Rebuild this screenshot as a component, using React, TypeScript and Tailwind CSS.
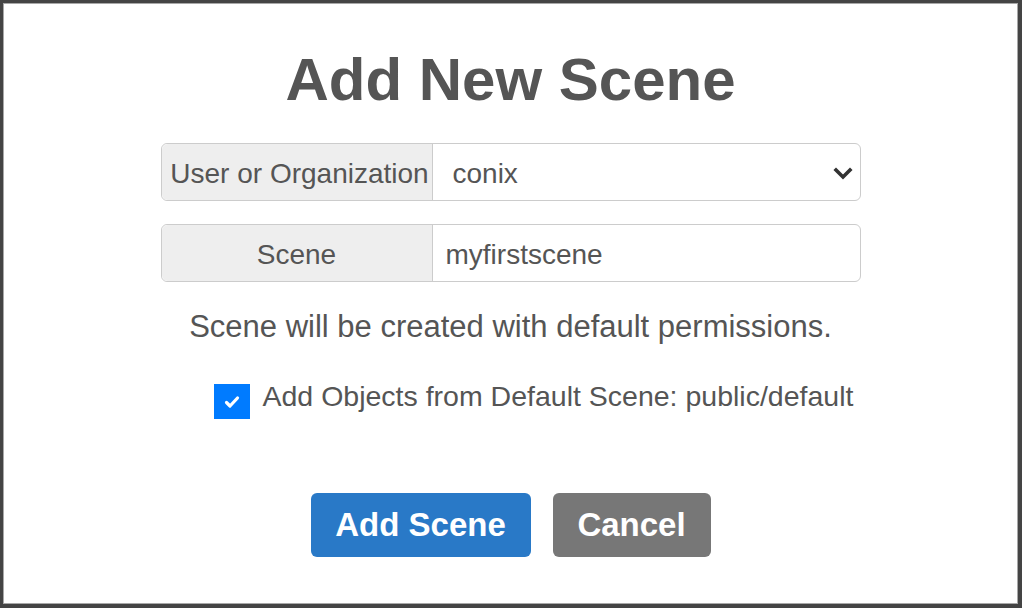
import React from "react";

const font = { fontFamily: '"Liberation Sans", Arial, Helvetica, sans-serif' };

function Chevron() {
  return (
    <svg width="20" height="14" viewBox="0 0 20 14" className="shrink-0">
      <polyline
        points="3,3 10,10 17,3"
        fill="none"
        stroke="#333"
        strokeWidth="3.6"
        strokeLinecap="square"
      />
    </svg>
  );
}

function Check() {
  return (
    <svg width="18" height="16" viewBox="0 0 18 16">
      <polyline
        points="3.5,8.5 7,12 14.5,4"
        fill="none"
        stroke="#fff"
        strokeWidth="3.2"
        strokeLinecap="round"
        strokeLinejoin="round"
      />
    </svg>
  );
}

export default function App() {
  return (
    <div
      className="h-[608px] w-full bg-[#444] pt-[3px] pl-[3px] pr-[4px] pb-[4px]"
      style={font}
    >
      <div className="h-full w-full border border-[#a8a8a8] bg-white">
        <div className="mx-auto flex w-[700px] flex-col">
          <h1 className="mt-[46px] text-center text-[60px] font-bold leading-none text-[#555]">
            Add New Scene
          </h1>

          {/* User or Organization */}
          <div className="mt-[33px] flex h-[58px] rounded-[6px] border border-[#ccc]">
            <div className="flex w-[271px] shrink-0 items-center justify-center rounded-l-[6px] border-r border-[#ccc] bg-[#eee] pl-[6px] pt-[3px] text-[28px] text-[#555]">
              User or Organization
            </div>
            <div className="flex flex-1 items-center justify-between pl-[20px] pr-[7px] pt-[3px] text-[28px] text-[#555]">
              <span>conix</span>
              <Chevron />
            </div>
          </div>

          {/* Scene */}
          <div className="mt-[23px] flex h-[58px] rounded-[6px] border border-[#ccc]">
            <div className="flex w-[271px] shrink-0 items-center justify-center rounded-l-[6px] border-r border-[#ccc] bg-[#eee] pt-[3px] text-[28px] text-[#555]">
              Scene
            </div>
            <div className="flex flex-1 items-center pl-[13px] pt-[3px] text-[28px] text-[#555]">
              myfirstscene
            </div>
          </div>

          <p className="mt-[29px] text-center text-[31px] leading-none text-[#555]">
            Scene will be created with default permissions.
          </p>

          <label className="mt-[42px] flex items-start gap-[13px] pl-[53px]">
            <span className="flex h-[35px] w-[36px] shrink-0 items-center justify-center bg-[#007bff]">
              <Check />
            </span>
            <span className="text-[28.5px] leading-[24px] text-[#555]">
              Add Objects from Default Scene: public/default
            </span>
          </label>

          <div className="mt-[74px] flex justify-center gap-[22px]">
            <button className="h-[64px] w-[220px] rounded-[6px] bg-[#2979c7] text-[33px] font-bold text-white">
              Add Scene
            </button>
            <button className="h-[64px] w-[158px] rounded-[6px] bg-[#777] text-[33px] font-bold text-white">
              Cancel
            </button>
          </div>
        </div>
      </div>
    </div>
  );
}
